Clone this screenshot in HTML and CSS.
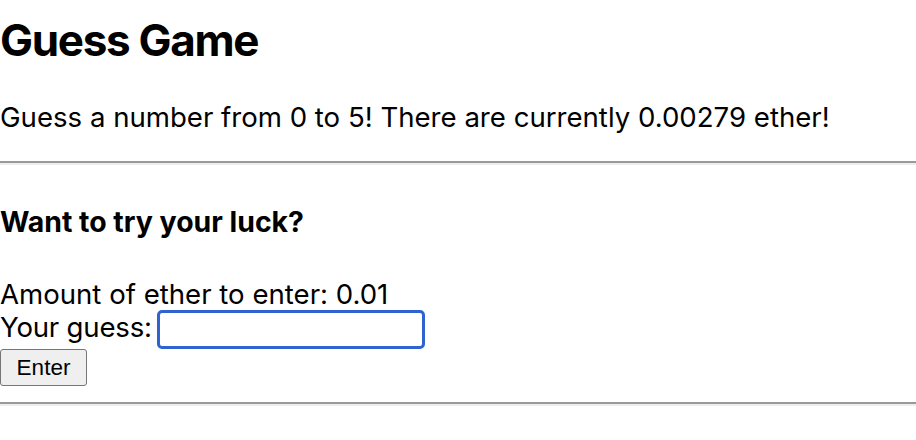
FILE: index.html
```html
<!DOCTYPE html>
<html>
<head>
<meta charset="utf-8">
<link rel="stylesheet" href="styles.css">
</head>
<body>
<h1 class="title">Guess Game</h1>
<p class="intro">Guess a number from 0 to 5! There are currently 0.00279 ether!</p>
<hr class="rule">
<form class="entry">
  <h3 class="subtitle">Want to try your luck?</h3>
  <div class="fields">
    <div class="line">Amount of ether to enter: 0.01</div>
    <div class="line guess-line"><label class="label">Your guess:</label><input class="guess" type="text"></div>
  </div>
  <button class="btn" type="button">Enter</button>
</form>
<hr class="rule rule-end">
</body>
</html>
```
FILE: styles.css
```css
html, body {
  margin: 0;
  padding: 0;
  background: #fff;
}
body {
  font-family: Inter, "Noto Sans", sans-serif;
  color: #000;
  font-size: 27.6px;
}
.title {
  font-size: 44px;
  font-weight: 700;
  margin: 14px 0 0;
  line-height: 52px;
  letter-spacing: -1.3px;
}
.intro {
  margin: 35px 0 0;
  line-height: 32px;
}
.rule {
  margin: 28px 0 0;
  border: 0;
  border-top: 2px solid #9a9a9a;
  border-bottom: 2px solid #eeeeee;
  height: 0;
}
.subtitle {
  margin: 40px 0 0;
  font-size: 28.4px;
  font-weight: 700;
  line-height: 34px;
}
.fields {
  margin-top: 39px;
}
.line {
  line-height: 33px;
}
.guess-line {
  display: flex;
  align-items: flex-start;
}
.label {
  letter-spacing: -0.2px;
}
.guess {
  box-sizing: border-box;
  width: 268px;
  height: 39px;
  border: 3px solid #2f63d0;
  border-radius: 5px;
  margin: -1px 0 0 5px;
  padding: 0;
  outline: none;
  background: #fff;
}
.btn {
  display: block;
  margin: 0;
  width: 87px;
  height: 37px;
  font-family: "Liberation Sans", Arial, sans-serif;
  font-size: 22.5px;
  background: #efefef;
  border: 1px solid #767676;
  border-radius: 3px;
  color: #000;
  padding: 0;
}
.rule-end {
  margin-top: 16px;
}
```
